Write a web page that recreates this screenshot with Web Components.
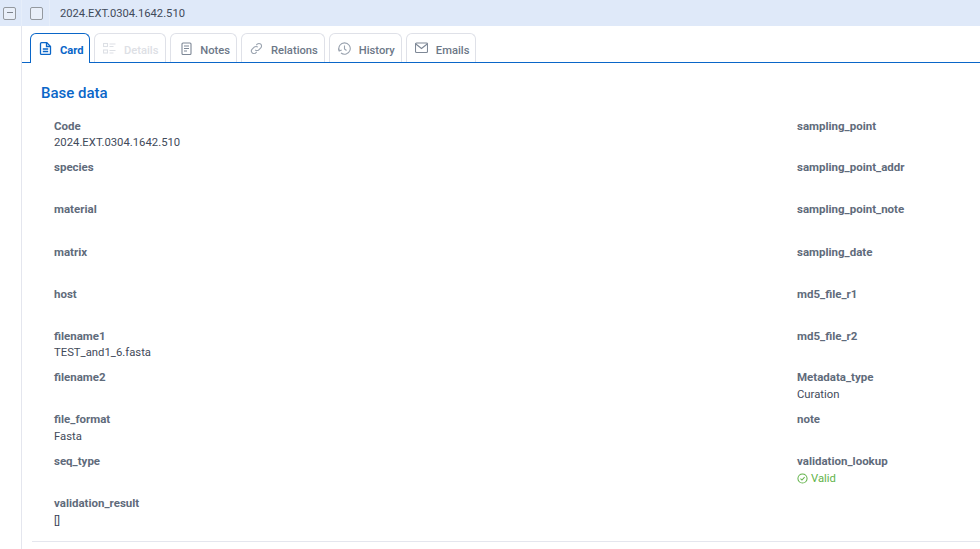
<!DOCTYPE html>
<html>
<head>
<meta charset="utf-8">
<style>
	html, body { margin: 0; padding: 0; background: #fff; }
	body { font-family: Roboto, "Liberation Sans", sans-serif; overflow: hidden; }
</style>
</head>
<body>
<record-view></record-view>
<script>
// A1. Row strip on top of the card
class RowHeader extends HTMLElement {
	constructor() {
		super();
		this.shadow = this.attachShadow({ mode: 'open' });
		this.shadow.innerHTML = `
			<style>
				:host { display: flex; height: 26px; background: #dfe9f9; color: #3f4a5a; font-size: 11.2px; }
				.cell { box-sizing: border-box; display: flex; align-items: center; border-right: 1px solid #e6eefa; }
				.first { width: 22px; padding-left: 3px; }
				.second { width: 28px; padding-left: 8px; }
				.minus { box-sizing: border-box; width: 13px; height: 13px; border: 1.5px solid #94999f; border-radius: 2px; background: #e9eff9; position: relative; }
				.minus::after { content: ''; position: absolute; left: 2.5px; right: 2.5px; top: 4px; height: 1px; background: #7d838c; }
				.check { box-sizing: border-box; width: 13px; height: 13px; border: 1.5px solid #94999f; border-radius: 2px; background: #e9eff9; }
				span { margin-left: 10px; align-self: center; }
			</style>
			<div class="cell first"><div class="minus"></div></div>
			<div class="cell second"><div class="check"></div></div>
			<span><slot></slot></span>
		`;
	}
}

// A2. One tab of the tab bar
class TabItem extends HTMLElement {
	constructor() {
		super();
		this.shadow = this.attachShadow({ mode: 'open' });
		this.shadow.innerHTML = `
			<style>
				:host { box-sizing: border-box; display: flex; align-items: center; height: 29px; padding: 4px 6px 0 8px; gap: 8px; border: 1px solid #dfe1e8; border-bottom: 0; border-radius: 6px 6px 0 0; color: #6c7787; font-size: 11.2px; font-weight: 500; background: #fff; }
				:host([active]) { height: 30px; margin-bottom: -1px; padding-bottom: 1px; padding-right: 5.3px; border: 1px solid #0a66c8; border-bottom: 0; color: #0a66c8; font-weight: 700; }
				:host([disabled]) { color: #dde0e5; padding-right: 6.8px; }
				::slotted(svg) { width: 13px; height: 13px; flex: none; margin-top: -3px; fill: none; stroke: currentColor; stroke-width: 1.1; }
			</style>
			<slot name="icon"></slot><slot></slot>
		`;
	}
}

// A3. Label and value pair
class DataField extends HTMLElement {
	constructor() {
		super();
		this.shadow = this.attachShadow({ mode: 'open' });
		this.shadow.innerHTML = `
			<style>
				:host { display: block; color: #3f4a5a; font-size: 11.3px; line-height: 16px; }
				.label { font-weight: 700; font-size: 11.5px; color: #5f6b7b; height: 17.6px; }
				.value { height: 17px; }
			</style>
			<div class="label"></div><div class="value"><slot></slot></div>
		`;
		this.shadow.querySelector('.label').textContent = this.getAttribute('label');
	}
}

// A4. Whole card
const LEFT = [['Code', '2024.EXT.0304.1642.510'], ['species'], ['material'], ['matrix'], ['host'], ['filename1', 'TEST_and1_6.fasta'], ['filename2'], ['file_format', 'Fasta'], ['seq_type'], ['validation_result', '[]']];
const RIGHT = [['sampling_point'], ['sampling_point_addr'], ['sampling_point_note'], ['sampling_date'], ['md5_file_r1'], ['md5_file_r2'], ['Metadata_type', 'Curation'], ['note'], ['validation_lookup', 'VALID'], []];
const icon = (d, color) => `<svg slot="icon" viewBox="0 0 13 13" xmlns="http://www.w3.org/2000/svg"${color ? ` style="stroke:${color}"` : ''}>${d}</svg>`;
const ICONS = {
	card: '<path stroke-width="1.300" d="M2.500.7h5.300l3.700 3.700v7a1 1 0 0 1-1 1h-8a1 1 0 0 1-1-1V1.700a1 1 0 0 1 1-1z"/><path stroke-width="1.300" d="M7.500.7v3.800h4M3.800 7h5.400M3.800 9.500h5.400"/>',
	details: '<rect x=".5" y="1.500" width="4" height="3"/><rect x=".5" y="8" width="4" height="3"/><path d="M6.500 2h6M6.500 4.500h4M6.500 8.500h6M6.500 11h4"/>',
	notes: '<rect x="3" y="1" width="9" height="11.500" rx="1"/><path d="M5 4h5M5 6.500h5M5 9h3"/>',
	relations: '<path d="M5.200 7.800a2.500 2.500 0 0 0 3.600 0l2-2a2.500 2.500 0 0 0-3.600-3.600L6.300 3.100"/><path d="M7.800 5.200a2.500 2.500 0 0 0-3.600 0l-2 2a2.500 2.500 0 0 0 3.600 3.600l.9-.9"/>',
	history: '<path d="M1.200 8.500A5.700 5.700 0 1 1 3 11"/><path d="M.4 6.300 1.200 9l2.500-1M6.500 3.500V7l2 1.500"/>',
	emails: '<rect x=".5" y="1" width="12" height="9.500" rx="1"/><path d="M.8 2l5.700 4.500L12.200 2"/>'
};

class RecordView extends HTMLElement {
	constructor() {
		super();
		this.shadow = this.attachShadow({ mode: 'open' });
		const tabs = [['card', 'Card', 'active'], ['details', 'Details', 'disabled'], ['notes', 'Notes', '', '#7e8896'], ['relations', 'Relations', '', '#9aa3af'], ['history', 'History', '', '#9aa3af'], ['emails', 'Emails', '', '#7e8896']];
		const heights = [41.4, 42, 43, 42, 41.6, 41.4, 42, 42, 42, 38];
		let fields = '';
		LEFT.forEach((l, i) => {
			const r = RIGHT[i];
			let val = r[1] || '';
			if (val === 'VALID') {
				val = `<span class="valid"><svg viewBox="0 0 12 12" width="11" height="11" fill="none" stroke="#62b34a" stroke-width="1.100"><circle cx="6" cy="6" r="5"/><path d="M3.800 6.200 5.400 7.700 8.300 4.500"/></svg>Valid</span>`;
			}
			fields += `<data-field label="${l[0]}">${l[1] || ''}</data-field>`;
			fields += r.length ? `<data-field label="${r[0]}">${val}</data-field>` : '<div></div>';
		});
		this.shadow.innerHTML = `
			<style>
				:host { display: block; height: 549px; overflow: hidden; }
				.body { margin-left: 21px; border-left: 1px solid #e4e6ee; height: 523px; box-sizing: border-box; padding-top: 7px; }
				.tabs { display: flex; gap: 4px; padding-left: 8px; border-bottom: 1px solid #0a66c8; height: 29px; }
				h2 { margin: 21px 0 0 19px; font-size: 15px; line-height: 18px; font-weight: 500; color: #0a66c8; }
				.grid { display: grid; grid-template-columns: 743px 1fr; grid-template-rows: ${heights.map((h) => h + 'px').join(' ')}; margin: 15.6px 0 0 32px; }
				.valid { display: inline-flex; align-items: center; gap: 3px; color: #62b34a; }
				.rule { height: 1px; background: #e4e6ee; margin: 8px 0 0 10px; }
			</style>
			<row-header>2024.EXT.0304.1642.510</row-header>
			<div class="body">
				<div class="tabs">
					${tabs.map((t) => `<tab-item ${t[2]}>${icon(ICONS[t[0]], t[3])}${t[1]}</tab-item>`).join('')}
				</div>
				<h2>Base data</h2>
				<div class="grid">${fields}</div>
				<div class="rule"></div>
			</div>
		`;
	}
}

customElements.define('row-header', RowHeader);
customElements.define('tab-item', TabItem);
customElements.define('data-field', DataField);
customElements.define('record-view', RecordView);
</script>
</body>
</html>
